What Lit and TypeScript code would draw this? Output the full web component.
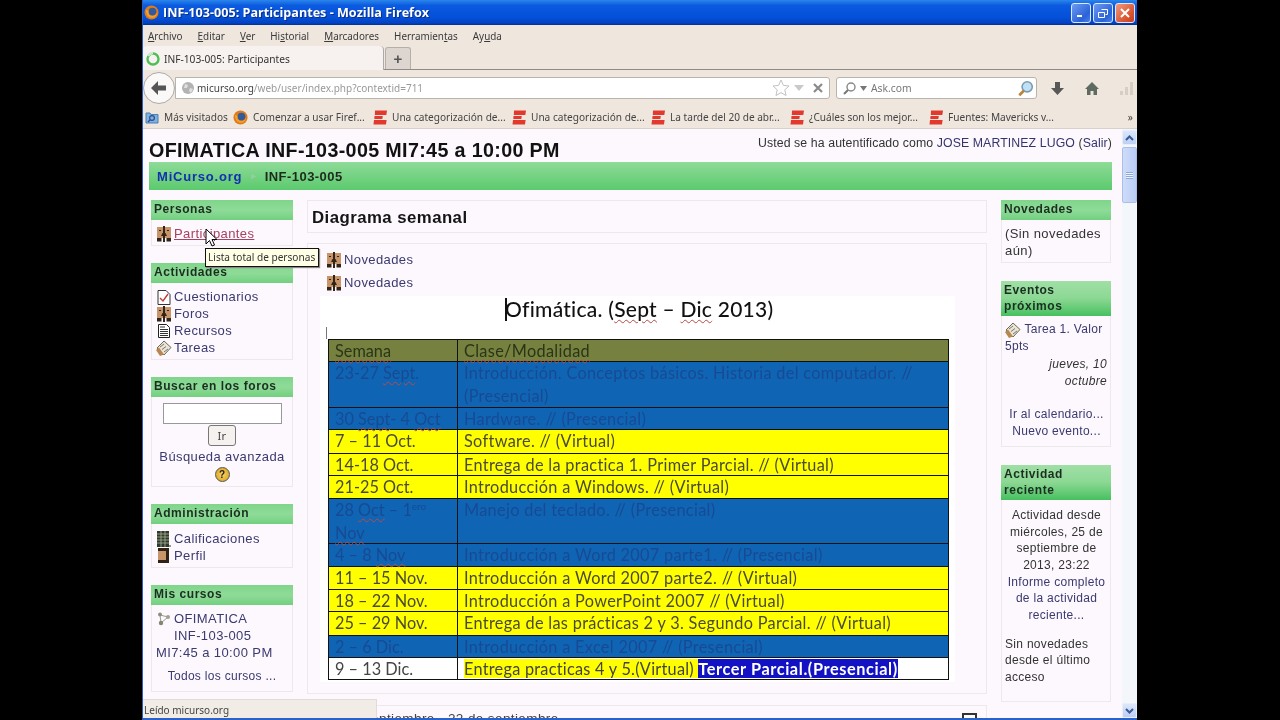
import { LitElement, html, css } from "lit";
import { customElement } from "lit/decorators.js";

const forum = html`<svg class="ic" width="16" height="16" viewBox="0 0 16 16"><path d="M1 1h6.500v11H1zM8.500 1H15v11H8.500z" fill="#c8956b"/><path d="M7 0h2v7H7zM6.500 7h3L11 10H5zM7 10h2v6H7zM1 12h4.500v3.500H1zM10.500 12H15v3.500h-4.500zM3 4h2v1H3zM11 4h2v1h-2z" fill="#33241a"/></svg>`;
const quiz = html`<svg class="ic" width="16" height="16" viewBox="0 0 16 16"><path d="M2 1.500h8l4 4v10H2z" fill="#fff" stroke="#333"/><path d="M4 9l3 3 5-7" stroke="#c23a3a" stroke-width="1.400" fill="none"/></svg>`;
const res = html`<svg class="ic" width="16" height="16" viewBox="0 0 16 16"><path d="M2.500 1.500h8l3 3v10h-11z" fill="#fff" stroke="#222"/><path d="M4 4h5M4 6.500h8M4 8.500h8M4 10.500h8M4 12.500h8" stroke="#333"/></svg>`;
const task = html`<svg class="ic" width="16" height="16" viewBox="0 0 16 16"><path d="M1 8l7-7 7 6.500-7 7.500z" fill="#e9e4d4" stroke="#6b6b58"/><path d="M4 7l4-3M6 9.500l4-3M8 12l4-3" stroke="#777"/><path d="M0 10l4 6 4-1.500-5-7z" fill="#b8864e"/></svg>`;
const grades = html`<svg class="ic" width="16" height="16" viewBox="0 0 16 16"><rect x="1" y="0" width="12" height="16" fill="#2f3a2a"/><path d="M1 3h12M1 6h12M1 9h12M1 12h12M5 0v16M9 0v16" stroke="#a9b098" stroke-width=".8"/><path d="M13 15h2" stroke="#333"/></svg>`;
const profile = html`<svg class="ic" width="16" height="16" viewBox="0 0 16 16"><path d="M2 1h10v14H2z" fill="#c8946a"/><path d="M2 0h11v3H2zM10 3h3v12h-3zM2 12h8v3H2z" fill="#2f2116"/></svg>`;
const course = html`<svg class="ic" width="16" height="16" viewBox="0 0 16 16"><path d="M4 4l8 2M4 4l1 8M12 6l-7 6" stroke="#999" fill="none"/><circle cx="4" cy="3.500" r="2" fill="#8d8f76"/><circle cx="12" cy="6" r="2" fill="#a5a089"/><circle cx="5" cy="12" r="2.200" fill="#83876f"/></svg>`;
const rss = html`<svg class="bk" width="14" height="14" viewBox="0 0 14 14"><path d="M1 3h4l1 1.500h7V13H1z" fill="#7fb0de" stroke="#4d7fb3"/><circle cx="7" cy="8" r="2.400" fill="none" stroke="#2a4f95" stroke-width="1.200"/><path d="M5 10l-2 2" stroke="#2a4f95" stroke-width="1.400"/></svg>`;
const ffx = (s: number) => html`<svg class="bk" width="${s}" height="${s}" viewBox="0 0 16 16"><circle cx="8" cy="8" r="7.500" fill="#e07b1a"/><circle cx="9" cy="7" r="4.200" fill="#335b9c"/><path d="M2 5c0 7 5 10 9 8 2-1 3-3 3-5-1 3-4 4-6 3.500S4 9 5 6z" fill="#f2a12c"/></svg>`;
const ebook = html`<svg class="bk" width="14" height="15" viewBox="0 0 14 15"><path d="M2 .500h12L13.300 5H1.800zM1.500 6h8.300L9.300 9H1.300zM1 10h12.600L13 14.500H.500z" fill="#e2382e"/></svg>`;
const bm = ["Una categorización de...", "Una categorización de...", "La tarde del 20 de abr...", "¿Cuáles son los mejor...", "Fuentes: Mavericks v..."];

const sp = (t: string) => html`<span class="sp">${t}</span>`;
type Row = { h: number; c: string; a: unknown; b: unknown };
const rows: Row[] = [
  { h: 22, c: "hd", a: sp("Semana"), b: sp("Clase/Modalidad") },
  { h: 46, c: "bl", a: html`23-27 ${sp("Sept")}.`, b: html`Introducción. Conceptos básicos. Historia del computador. // (Presencial)` },
  { h: 22, c: "bl", a: html`30 ${sp("Sept")}- 4 ${sp("Oct")}`, b: "Hardware. // (Presencial)" },
  { h: 24, c: "ye", a: "7 – 11 Oct.", b: "Software. // (Virtual)" },
  { h: 22, c: "ye", a: "14-18 Oct.", b: "Entrega de la practica 1. Primer Parcial. // (Virtual)" },
  { h: 23, c: "ye", a: "21-25 Oct.", b: "Introducción a Windows. // (Virtual)" },
  { h: 45, c: "bl", a: html`28 ${sp("Oct")} – 1<sup>ero</sup> ${sp("Nov")}`, b: "Manejo del teclado. // (Presencial)" },
  { h: 23, c: "bl", a: html`4 – 8 ${sp("Nov")}`, b: "Introducción a Word 2007 parte1. // (Presencial)" },
  { h: 23, c: "ye", a: "11 – 15 Nov.", b: "Introducción a Word 2007 parte2. // (Virtual)" },
  { h: 22, c: "ye", a: "18 – 22 Nov.", b: "Introducción a PowerPoint 2007 // (Virtual)" },
  { h: 24, c: "ye", a: "25 – 29 Nov.", b: "Entrega de las prácticas 2 y 3. Segundo Parcial. // (Virtual)" },
  { h: 22, c: "bl", a: "2 – 6 Dic.", b: "Introducción a Excel 2007  // (Presencial)" },
  { h: 22, c: "wh", a: "9 – 13 Dic.", b: html`<span class="hl">Entrega practicas 4 y 5.(Virtual) </span><span class="sel">Tercer Parcial.(Presencial)</span>` },
];

@customElement("app-root")
export class AppRoot extends LitElement {
  static styles = css`
    :host { display: block; width: 1280px; height: 720px; background: #000; overflow: hidden; }
    svg { display: block; flex: none; }
    .win { position: relative; margin-left: 142px; width: 995px; height: 720px; display: flex; flex-direction: column; overflow: hidden; background: #efe6de; border-left: 1px solid #2a5fc0; box-sizing: border-box; border-bottom: 2px solid #2b62c8; filter: blur(.35px); font-family: "Noto Sans", sans-serif; color: #333; }
    .title { height: 25px; flex: none; display: flex; align-items: center; background: linear-gradient(#2a86ea 0, #0b5ae0 22%, #0450d8 70%, #0342c4 92%, #01308f 100%); color: #fff; padding: 0 2px 0 1px; font: bold 12.600px "Open Sans", sans-serif; text-shadow: 1px 1px 0 #0a2f8a; }
    .title .t { flex: 1; }
    .wb { width: 20px; height: 20px; border: 1px solid #dfe8fa; border-radius: 3px; box-sizing: border-box; background: linear-gradient(135deg, #6f9cf0, #2a62d8 70%, #4c82ea); display: flex; align-items: center; justify-content: center; }
    .wb.x { background: linear-gradient(135deg, #ef9a7e, #d9522e 70%, #c93e1c); }
    .wbs { display: flex; gap: 2px; }
    .menu { height: 21px; flex: none; display: flex; align-items: center; gap: 15px; padding: 0 0 0 5px; box-sizing: border-box; font-size: 9.900px; color: #3a3a3a; }
    .tabs { height: 24px; flex: none; display: flex; align-items: flex-end; border-bottom: 1px solid #8d8a88; box-sizing: border-box; position: relative; }
    .tab { width: 241px; height: 24px; box-sizing: border-box; background: #f7f1ef; border-radius: 4px 4px 0 0; border-right: 1px solid #aaa; display: flex; align-items: center; gap: 3px; padding: 2px 0 0 2px; font-size: 10.200px; margin-bottom: -1px; }
    .plus { width: 26px; height: 22px; box-sizing: border-box; margin-left: 1px; background: #ddd6d0; border: 1px solid #b5afaa; border-bottom: none; border-radius: 3px 3px 0 0; display: flex; align-items: center; justify-content: center; font: bold 15px "Liberation Sans", sans-serif; color: #555; }
    .nav { height: 36px; flex: none; display: flex; align-items: center; position: relative; padding-left: 32px; }
    .back { position: absolute; left: 0; top: 2px; width: 32px; height: 32px; box-sizing: border-box; border-radius: 50%; background: #fbf9f8; border: 1px solid #aaa; display: flex; align-items: center; justify-content: center; }
    .url { width: 655px; height: 22px; box-sizing: border-box; background: #fff; border: 1px solid #b8b4b0; border-radius: 0 3px 3px 0; display: flex; align-items: center; padding-left: 5px; font-size: 10px; color: #999; gap: 2px; }
    .url b { font-weight: 400; color: #444; }
    .url .g { flex: 1; }
    .url .star { margin-right: 1px; }
    .url .stop { margin: 0 5px 0 5px; }
    .search { margin-left: 6px; width: 201px; height: 22px; box-sizing: border-box; background: #fff; border: 1px solid #b8b4b0; border-radius: 3px; display: flex; align-items: center; padding: 0 2px 0 5px; gap: 3px; font-size: 10.300px; color: #777; }
    .search .g { flex: 1; margin-left: 1px; }
    .tools { display: flex; align-items: center; margin-left: 13px; gap: 19px; }
    .marks { height: 23px; flex: none; display: flex; align-items: center; font-size: 10.100px; color: #444; padding-left: 2px; border-bottom: 1px solid #d8d0ca; box-sizing: border-box; }
    .bk { margin-right: 5px; }
    .title .bk { margin-right: 4px; }
    .mk { display: flex; align-items: center; white-space: nowrap; flex: none; }
    .mk.a { width: 88px; }
    .mk.b { width: 140px; }
    .mk.c { width: 139px; }
    .more { margin-left: auto; margin-right: 4px; }

    .view { flex: 1; min-height: 0; display: flex; overflow: hidden; }
    .page { flex: 1; min-width: 0; background: #fdf8fd; padding: 1px 10px 0 6px; font: 13px "Liberation Sans", sans-serif; letter-spacing: .4px; color: #333; overflow: hidden; }
    .sb { width: 15px; flex: none; background: #f3f6fb; display: flex; flex-direction: column; padding-top: 1px; box-sizing: border-box; }
    .sbb { height: 15px; flex: none; background: linear-gradient(#dce7fb, #bcd0f5); border: 1px solid #e6eefc; box-sizing: border-box; border-radius: 2px; display: flex; align-items: center; justify-content: center; }
    .thumb { height: 56px; margin-top: 2px; flex: none; background: linear-gradient(90deg, #cfdcf8, #b9cdf6); border: 1px solid #a9bfea; box-sizing: border-box; border-radius: 2px; display: flex; align-items: center; justify-content: center; }
    .thumb i { display: block; width: 7px; height: 7px; background: repeating-linear-gradient(#8ea8da 0 1px, #eef3fd 1px 2px); }
    .sp0 { flex: 1; }

    .head { height: 32px; display: flex; justify-content: space-between; align-items: flex-start; }
    h1 { margin: 9px 0 0; font: bold 19.700px "Liberation Sans", sans-serif; letter-spacing: .35px; color: #111; white-space: nowrap; }
    .user { margin-top: 6px; font-size: 12.300px; letter-spacing: .1px; color: #333; }
    .user a { color: #34346e; }
    .crumb { height: 28px; display: flex; align-items: center; gap: 6px; padding-left: 8px; background: linear-gradient(#8edb98, #5cca6e); font: bold 13px "Liberation Sans", sans-serif; letter-spacing: .45px; color: #1e2a1e; }
    .crumb a { color: #1330b0; letter-spacing: .8px; }
    .crumb .sep { color: #93cf9c; font-size: 9px; margin: 0 0 0 1px; }
    .cols { margin-top: 10px; padding-left: 2px; display: flex; align-items: flex-start; gap: 14px; }
    .left { width: 142px; flex: none; display: flex; flex-direction: column; gap: 17px; }
    .mid { width: 680px; flex: none; display: flex; flex-direction: column; }
    .right { width: 110px; flex: none; display: flex; flex-direction: column; gap: 18px; }
    .block { border: 1px solid #ece8ec; box-sizing: border-box; }
    .bh { height: 20px; box-sizing: border-box; padding: 1px 3px 0; margin: -1px -1px 0; background: linear-gradient(#7fd58a, #8fdb98 50%, #72d07f); font: bold 12px/16px "Liberation Sans", sans-serif; letter-spacing: .55px; color: #1c2e22; }
    .bh.two { height: 35px; background: linear-gradient(#a0dfa6, #8bd893 50%, #47c060); }
    .bb { padding: 5px 4px 3px; line-height: 17px; }
    .bb.t6 { padding-top: 6px; }
    .right .bb { padding-left: 3px; padding-right: 2px; }
    .sm { font-size: 12px; letter-spacing: .3px; }
    .li { display: flex; align-items: center; gap: 2px; height: 17px; white-space: nowrap; }
    .ic { flex: none; }
    .il { display: inline-block; vertical-align: middle; }
    a { color: #3a3a70; text-decoration: none; }
    .hot { color: #a8405f; text-decoration: underline; }
    .c { text-align: center; }
    .ctr { display: flex; flex-direction: column; align-items: center; padding: 6px 4px 4px; }
    .ctr a { margin-top: 2px; }
    .inp { width: 119px; height: 21px; box-sizing: border-box; border: 1px solid #999; background: #fff; }
    .btn { width: 28px; height: 21px; box-sizing: border-box; margin-top: 1px; border: 1px solid #777; border-radius: 3px; background: #f4f1ee; font: 11px/19px "Noto Sans", sans-serif; text-align: center; color: #444; }
    .help { width: 15px; height: 15px; margin-top: 2px; border-radius: 50%; background: radial-gradient(#f7d467, #d79a13); border: 1px solid #555; box-sizing: border-box; font: bold 10px/13px "Liberation Sans", sans-serif; text-align: center; color: #222; letter-spacing: 0; }

    .dt { height: 33px; box-sizing: border-box; padding: 7px 4px 0; font: bold 16.800px "Liberation Sans", sans-serif; letter-spacing: .45px; color: #151515; }
    .main { height: 451px; margin-top: 10px; box-sizing: border-box; padding: 4px 0 0 12px; }
    .nov { display: flex; gap: 2px; align-items: center; height: 23px; padding-left: 6px; }
    .doc { width: 635px; margin-top: 2px; background: #fff; height: 386px; box-sizing: border-box; position: relative; }
    .dtitle { box-sizing: border-box; padding-left: 185px; height: 31px; font: 500 21px/26px Lato, sans-serif; letter-spacing: .25px; color: #111; white-space: nowrap; display: flex; }
    .caret { width: 1.500px; height: 23px; background: #111; margin-top: 2px; margin-right: -1.500px; }
    .corner { width: 1px; height: 12px; background: #777; margin: 0 0 0 6px; }
    table { border-collapse: collapse; table-layout: fixed; margin-left: 8px; width: 621px; font: 16.300px/23px Lato, sans-serif; letter-spacing: 0; }
    td { border: 1px solid #111; padding: 0 0 0 6px; vertical-align: top; box-sizing: border-box; }
    td + td { letter-spacing: .32px; }
    .cell { overflow: visible; margin-top: -1px; }
    col.a { width: 129px; }
    tr.hd td { background: #76803f; color: #2a3518; }
    tr.bl td { background: #0f65b3; color: #184a94; }
    tr.ye td { background: #ffff00; color: #4a4a33; }
    tr.wh td { background: #fff; color: #444; }
    sup { font-size: 10px; line-height: 0; }
    .sp { text-decoration: underline wavy #b84848 1px; text-underline-offset: 2px; }
    .hl { background: #ffff00; white-space: pre; letter-spacing: .25px; }
    .sel { background: #1212c4; color: #fff; font-weight: 700; letter-spacing: .6px; }
    .next { height: 40px; margin-top: 11px; box-sizing: border-box; padding: 5px 0 0 16px; white-space: nowrap; font-size: 13.500px; display: flex; justify-content: space-between; color: #444; }
    .chk { width: 15px; height: 12px; margin: 2px 9px 0 0; border: 2px solid #333; box-sizing: border-box; background: #fff; }

    .tip { position: absolute; left: 62px; top: 248px; width: 114px; height: 19px; box-sizing: border-box; background: #ffffe6; border: 1px solid #111; box-shadow: 1px 1px 1px #888; font-size: 10.100px; line-height: 17px; padding-left: 2px; color: #333; white-space: nowrap; }
    .cursor { position: absolute; left: 62px; top: 228px; }
    .status { position: absolute; left: 0; top: 699px; width: 234px; height: 19px; box-sizing: border-box; background: #f2ece6; border: 1px solid #e3dcd6; border-left: 0; border-bottom: 0; font-size: 10px; line-height: 20px; padding-left: 1px; color: #444; }
  `;

  render() {
    return html`<div class="win">
      <div class="title">
        ${ffx(15)}<span class="t">INF-103-005: Participantes - Mozilla Firefox</span>
        <div class="wbs">
          <div class="wb"><svg width="10" height="10"><rect x="1" y="7" width="5" height="2" fill="#fff"/></svg></div>
          <div class="wb"><svg width="12" height="12" fill="none" stroke="#fff"><path d="M4.500 2.500h6v5h-2M1.500 5.500h6v5h-6z"/></svg></div>
          <div class="wb x"><svg width="12" height="12" stroke="#fff" stroke-width="2"><path d="M2 2l8 8M10 2l-8 8"/></svg></div>
        </div>
      </div>
      <div class="menu">
        <span><u>A</u>rchivo</span><span><u>E</u>ditar</span><span><u>V</u>er</span><span>Hi<u>s</u>torial</span><span><u>M</u>arcadores</span><span>Herramien<u>t</u>as</span><span>Ay<u>u</u>da</span>
      </div>
      <div class="tabs">
        <div class="tab">
          <svg width="16" height="16"><circle cx="8" cy="8" r="5.500" fill="none" stroke="#4fbf55" stroke-width="2.400"/><path d="M3 5a6 6 0 0 1 5-3" stroke="#cfe7d0" stroke-width="2.400" fill="none"/></svg>
          INF-103-005: Participantes
        </div>
        <div class="plus">+</div>
      </div>
      <div class="nav">
        <div class="back"><svg width="18" height="16" viewBox="0 0 18 16"><path d="M8 1L1 8l7 7v-4.500h8v-5H8z" fill="#555"/></svg></div>
        <div class="url">
          <svg width="14" height="14" viewBox="0 0 14 14"><circle cx="7" cy="7" r="6" fill="#b3b3b3"/><path d="M4 3l3 1-1 3-3 0zM9 7l3 1-2 4-2-2z" fill="#e0e0e0"/></svg>
          <span class="g"><b>micurso.org</b>/web/user/index.php?contextid=711</span>
          <svg class="star" width="18" height="18" viewBox="0 0 18 18"><path d="M9 1l2.400 5.400 5.600.6-4.200 3.800 1.200 5.700L9 13.600 4 16.500l1.200-5.700L1 7l5.600-.6z" fill="#fff" stroke="#c2c2c2"/></svg>
          <svg width="12" height="8"><path d="M1 1h10L6 7z" fill="#c9c9c9"/></svg>
          <svg class="stop" width="12" height="12" stroke="#8a8a8a" stroke-width="2.200"><path d="M2 2l8 8M10 2l-8 8"/></svg>
        </div>
        <div class="search">
          <svg width="15" height="15" viewBox="0 0 15 15"><circle cx="9" cy="6" r="4" fill="#fff" stroke="#888" stroke-width="1.400"/><path d="M6 9l-4 4" stroke="#777" stroke-width="2"/></svg>
          <svg width="7" height="5"><path d="M0 0h7L3.500 5z" fill="#777"/></svg>
          <span class="g">Ask.com</span>
          <svg width="17" height="17" viewBox="0 0 15 15"><circle cx="9" cy="6" r="4.500" fill="#bfe0f5" stroke="#7c9bb0" stroke-width="1.400"/><path d="M6 9.500l-4 4" stroke="#b8863c" stroke-width="2.400"/></svg>
        </div>
        <div class="tools">
          <svg width="15" height="15" viewBox="0 0 15 15"><path d="M5 1h5v6h4l-6.500 7L1 7h4z" fill="#585858"/></svg>
          <svg width="16" height="15" viewBox="0 0 16 15"><path d="M8 1L1 8h2v6h3.500v-4h3v4H13V8h2z" fill="#5f6b60"/></svg>
          <svg width="15" height="14" viewBox="0 0 15 14"><path d="M1 10h3v4H1zM6 6h3v8H6zM11 1h3v13h-3z" fill="#d6cfc8"/></svg>
        </div>
      </div>
      <div class="marks">
        <div class="mk a">${rss}Más visitados</div>
        <div class="mk b">${ffx(15)}Comenzar a usar Firef...</div>
        ${bm.map((b) => html`<div class="mk c">${ebook}${b}</div>`)}
        <span class="more">»</span>
      </div>
      <div class="view">
        <div class="page">
          <div class="head">
            <h1>OFIMATICA INF-103-005 MI7:45 a 10:00 PM</h1>
            <div class="user">Usted se ha autentificado como <a>JOSE MARTINEZ LUGO</a> (<a>Salir</a>)</div>
          </div>
          <div class="crumb"><a>MiCurso.org</a><span class="sep">►</span><span>INF-103-005</span></div>
          <div class="cols">
            <div class="left">
              <div class="block"><div class="bh">Personas</div><div class="bb"><div class="li">${forum}<a class="hot">Participantes</a></div></div></div>
              <div class="block"><div class="bh">Actividades</div><div class="bb">
                <div class="li">${quiz}<a>Cuestionarios</a></div>
                <div class="li">${forum}<a>Foros</a></div>
                <div class="li">${res}<a>Recursos</a></div>
                <div class="li">${task}<a>Tareas</a></div>
              </div></div>
              <div class="block"><div class="bh">Buscar en los foros</div><div class="bb ctr">
                <div class="inp"></div><div class="btn">Ir</div><a>Búsqueda avanzada</a><div class="help">?</div>
              </div></div>
              <div class="block"><div class="bh">Administración</div><div class="bb t6">
                <div class="li">${grades}<a>Calificaciones</a></div>
                <div class="li">${profile}<a>Perfil</a></div>
              </div></div>
              <div class="block"><div class="bh">Mis cursos</div><div class="bb">
                <div class="li">${course}<a>OFIMATICA</a></div>
                <div class="li" style="padding-left:18px"><a>INF-103-005</a></div>
                <div class="li"><a>MI7:45 a 10:00 PM</a></div>
                <div class="c sm" style="margin:7px 0 3px"><a>Todos los cursos ...</a></div>
              </div></div>
            </div>
            <div class="mid">
              <div class="block dt">Diagrama semanal</div>
              <div class="block main">
                <div class="nov">${forum}<a>Novedades</a></div>
                <div class="nov">${forum}<a>Novedades</a></div>
                <div class="doc">
                  <div class="dtitle"><span class="caret"></span><span>Ofimática. (<span class="sp">Sept</span> – <span class="sp">Dic</span> 2013)</span></div>
                  <div class="corner"></div>
                  <table>
                    <colgroup><col class="a" /><col /></colgroup>
                    ${rows.map((r) => html`<tr class="${r.c}" style="height:${r.h}px"><td><div class="cell" style="height:${r.h - 1}px">${r.a}</div></td><td><div class="cell" style="height:${r.h - 1}px">${r.b}</div></td></tr>`)}
                  </table>
                </div>
              </div>
              <div class="block next"><span>16 de septiembre - 22 de septiembre</span><span class="chk"></span></div>
            </div>
            <div class="right">
              <div class="block"><div class="bh">Novedades</div><div class="bb">(Sin novedades aún)</div></div>
              <div class="block"><div class="bh two">Eventos próximos</div><div class="bb sm" style="padding-bottom:6px">
                <div><span class="il">${task}</span> <a>Tarea 1. Valor 5pts</a></div>
                <div style="text-align:right;font-style:italic;padding-right:1px;margin-top:1px">jueves, 10 octubre</div>
                <div class="c" style="margin-top:16px"><a>Ir al calendario...</a><br /><a>Nuevo evento...</a></div>
              </div></div>
              <div class="block"><div class="bh two">Actividad reciente</div><div class="bb sm" style="padding-top:7px;line-height:16.670px;height:201px;box-sizing:border-box">
                <div class="c">Actividad desde miércoles, 25 de septiembre de 2013, 23:22<br /><a>Informe completo de la actividad reciente...</a></div>
                <div style="margin-top:12px">Sin novedades desde el último acceso</div>
              </div></div>
            </div>
          </div>
        </div>
        <div class="sb">
          <div class="sbb"><svg width="9" height="6" fill="none" stroke="#3c5a94" stroke-width="2"><path d="M1 5l3.500-3.500L8 5"/></svg></div>
          <div class="thumb"><i></i></div>
          <div class="sp0"></div>
          <div class="sbb"><svg width="9" height="6" fill="none" stroke="#3c5a94" stroke-width="2"><path d="M1 1l3.500 3.500L8 1"/></svg></div>
        </div>
      </div>
      <div class="tip">Lista total de personas</div>
      <svg class="cursor" width="13" height="20" viewBox="0 0 13 20"><path d="M1 1v15l3.500-3.500L7 18l2.500-1-2.500-5.500H12z" fill="#fff" stroke="#000"/></svg>
      <div class="status">Leído micurso.org</div>
    </div>`;
  }
}
